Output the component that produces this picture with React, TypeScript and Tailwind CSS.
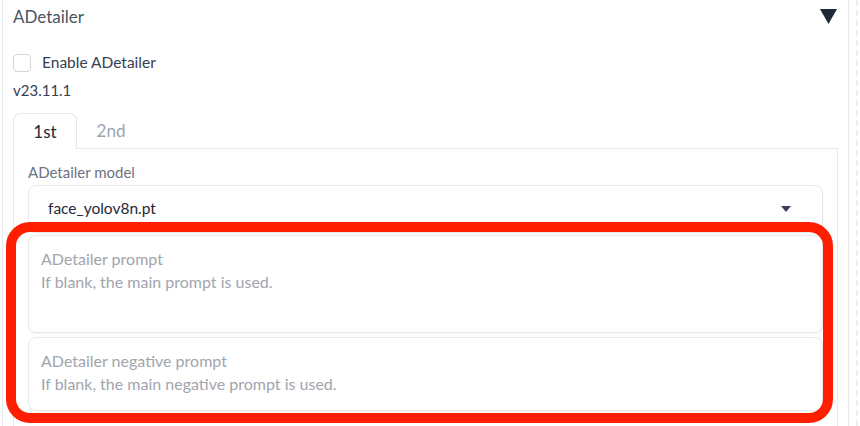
import React from "react";

const font = { fontFamily: "Lato, 'Noto Sans', sans-serif" };

const PromptBox = ({ title, hint, height }: { title: string; hint: string; height: string }) => (
  <div className={`rounded-lg border border-[#e8e9ec] bg-white shadow-[0_1px_2px_rgba(0,0,0,0.05)] px-[12px] pt-[11px] ${height}`}>
    <p className="text-[16px] leading-[23px] text-[#a1a5ad]">{title}</p>
    <p className="text-[16px] leading-[23px] text-[#a1a5ad]">{hint}</p>
  </div>
);

const App = () => {
  return (
    <div className="relative flex h-[426px] w-[860px] overflow-hidden bg-white" style={font}>
      <div className="ml-[2px] h-full w-[847px] border-x border-[#e5e7eb] px-[10px]">
        <div className="flex h-[34px] items-center justify-between">
          <span className="text-[17px] text-[#4b5563]">ADetailer</span>
          <svg width="17" height="15" viewBox="0 0 17 15" className="mr-[1px] mt-[-2px]">
            <path d="M0 0 H17 L8.5 15 Z" fill="#1f2937" />
          </svg>
        </div>

        <label className="mt-[20px] flex h-[18px] items-center gap-[11px]">
          <span className="h-[18px] w-[18px] rounded-[4px] border border-[#d1d5db] bg-white" />
          <span className="text-[15.5px] text-[#374151]">Enable ADetailer</span>
        </label>

        <p className="mt-[8px] text-[15px] leading-[20px] text-[#374151]">v23.11.1</p>

        <div className="mt-[13px] flex h-[36px] items-end">
          <div className="flex h-[36px] w-[64px] items-center justify-center rounded-t-lg border border-b-0 border-[#e5e7eb] bg-white text-[17px] text-[#1f2937]">
            1st
          </div>
          <div className="flex h-[35px] w-[68px] items-center justify-center border-b border-[#e5e7eb] text-[17px] text-[#9ca3af]">
            2nd
          </div>
          <div className="h-[35px] flex-1 border-b border-[#e5e7eb]" />
        </div>

        <div className="h-[300px] border-x border-[#e5e7eb] px-[14px] pt-[13px]">
          <p className="text-[15px] leading-[20px] text-[#6b7280]">ADetailer model</p>
          <div className="mt-[3px] flex h-[48px] items-center justify-between rounded-lg border border-[#e8e9ec] bg-white pl-[19px] pr-[31px] shadow-[0_1px_2px_rgba(0,0,0,0.05)]">
            <span className="text-[15.5px] text-[#1f2937]">face_yolov8n.pt</span>
            <svg width="10" height="6" viewBox="0 0 10 6">
              <path d="M0 0 H10 L5 6 Z" fill="#374151" />
            </svg>
          </div>
          <div className="mt-[2px] flex flex-col gap-[4px]">
            <PromptBox title="ADetailer prompt" hint="If blank, the main prompt is used." height="h-[98px]" />
            <PromptBox title="ADetailer negative prompt" hint="If blank, the main negative prompt is used." height="h-[74px]" />
          </div>
        </div>
      </div>

      <div className="ml-[7px] h-full border-l-2 border-dashed border-[#eceef1]" />

      <div className="pointer-events-none absolute left-[6px] top-[222px] h-[201px] w-[827px] rounded-[24px] border-[10px] border-[#ff1f00]" />
    </div>
  );
};

export default App;
